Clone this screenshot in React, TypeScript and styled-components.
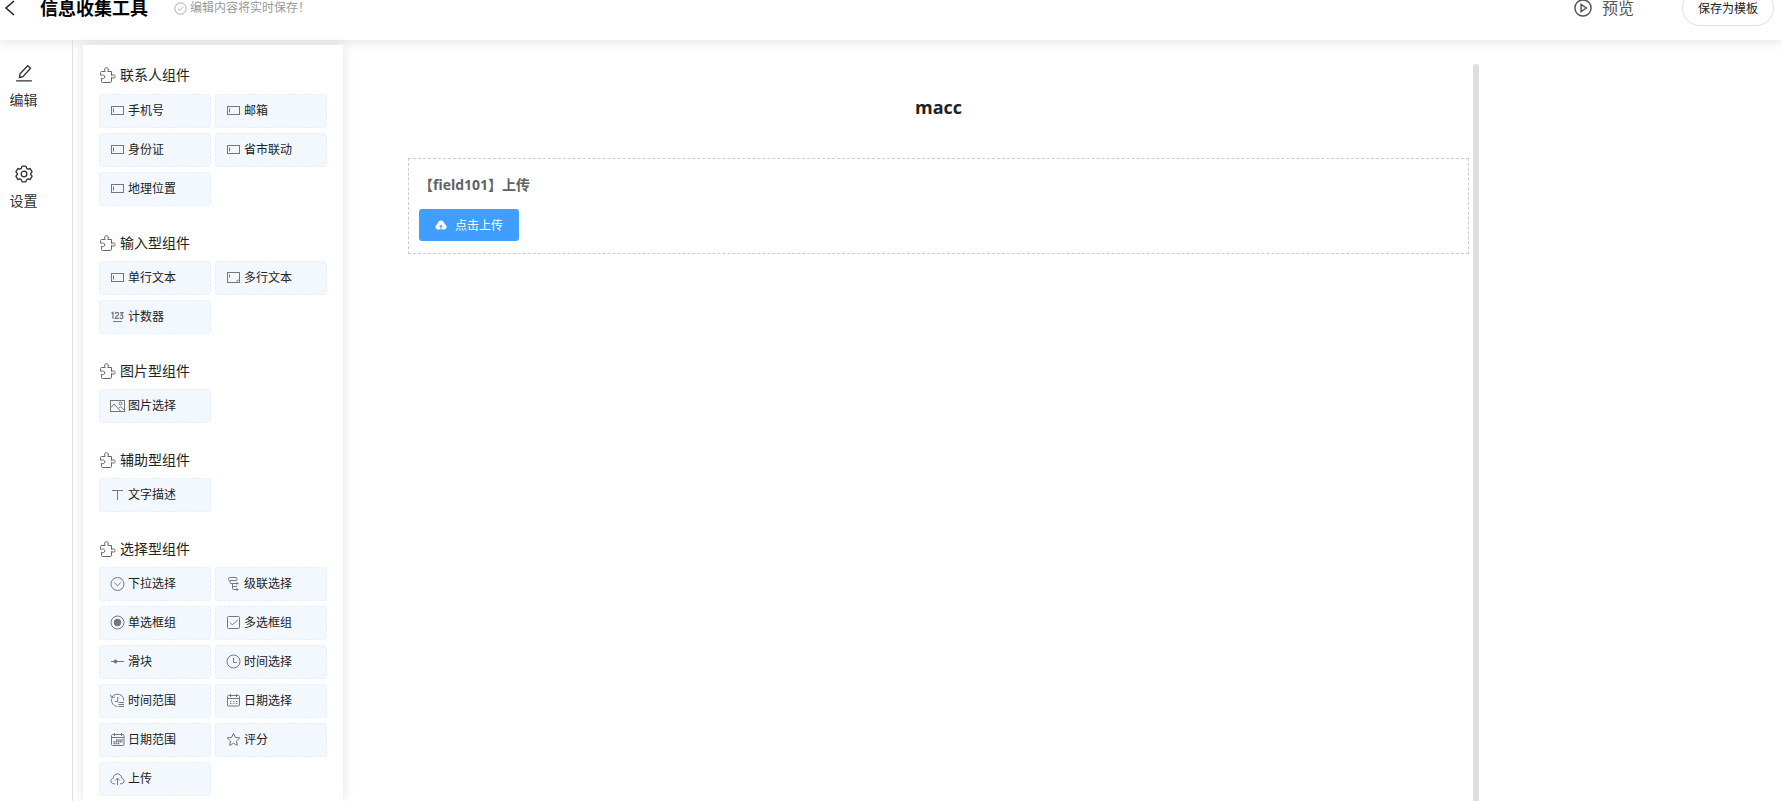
import React from 'react';
import styled, { createGlobalStyle } from 'styled-components';

const GlobalStyle = createGlobalStyle`
  * { box-sizing: border-box; }
  html, body { margin: 0; }
  body {
    background: #fff;
    color: #222;
    font-family: "Open Sans", "Noto Sans CJK SC", sans-serif;
    font-size: 14px;
    overflow: hidden;
  }
  button { font-family: inherit; cursor: pointer; }
  ul { list-style: none; margin: 0; padding: 0; }
  h1, h2, h3, p { margin: 0; }
`;

const Page = styled.div`
  display: flex;
  flex-direction: column;
  height: 100vh;
  overflow: hidden;
`;

const Header = styled.header`
  display: flex;
  align-items: center;
  flex: none;
  height: 64px;
  margin-top: -24px;
  padding: 0 8px 0 4px;
  background: #fff;
  box-shadow: 0 0 12px rgba(0, 0, 0, 0.15);
`;

const BackButton = styled.button`
  display: flex;
  padding: 0;
  border: 0;
  background: none;
  color: #222;
`;

const AppTitle = styled.h1`
  margin-left: 25px;
  color: #000;
  font-size: 18px;
  line-height: 24px;
  font-weight: 700;
`;

const SaveHint = styled.p`
  display: flex;
  align-items: center;
  gap: 3px;
  margin-left: 26px;
  color: #999;
  font-size: 12px;
  line-height: 20px;
`;

const Actions = styled.div`
  display: flex;
  align-items: center;
  gap: 48px;
  margin-left: auto;
`;

const PreviewButton = styled.button`
  display: flex;
  align-items: center;
  gap: 10px;
  padding: 0;
  border: 0;
  background: none;
  color: #555;
  font-size: 16px;
  line-height: 24px;
`;

const TemplateButton = styled.button`
  height: 36px;
  padding: 0 15px;
  border: 1px solid #dcdfe6;
  border-radius: 18px;
  background: #fff;
  color: #222;
  font-size: 12px;
`;

const Body = styled.div`
  display: flex;
  flex: 1;
  min-height: 0;
`;

const Nav = styled.nav`
  display: flex;
  flex-direction: column;
  align-items: center;
  gap: 53px;
  flex: none;
  width: 73px;
  padding: 24px 25px 0 0;
  border-right: 1px solid #e0e0e0;
`;

const NavButton = styled.button`
  display: flex;
  flex-direction: column;
  align-items: center;
  gap: 6px;
  padding: 0;
  border: 0;
  background: none;
  color: #333;
  font-size: 14px;
  line-height: 24px;
`;

const Palette = styled.aside`
  flex: none;
  width: 260px;
  margin: 5px 0 0 10px;
  padding: 20px 16px 0;
  background: #fff;
  box-shadow: 0 0 12px rgba(0, 0, 0, 0.12);
`;

const Group = styled.section`
  margin-bottom: 27px;
`;

const GroupTitle = styled.h2`
  display: flex;
  align-items: center;
  gap: 4px;
  padding: 0 0 9px 1px;
  color: #222;
  font-size: 14px;
  line-height: 20px;
  font-weight: 400;

  svg { color: #666; }

  ${Group} + ${Group} & { padding-bottom: 8px; }
`;

const Items = styled.ul`
  display: grid;
  grid-template-columns: 1fr 1fr;
  gap: 5px 4px;
`;

const ItemButton = styled.button`
  display: flex;
  align-items: center;
  gap: 3px;
  width: 100%;
  height: 34px;
  padding: 0 9px;
  border: 1px dashed #e4f0fd;
  border-radius: 3px;
  background: #f3f8ff;
  color: #222;
  font-size: 12px;
  line-height: 20px;

  svg { color: #777; }
`;

const Board = styled.main`
  display: flex;
  flex: 1;
  margin: 24px 303px 0 65px;
  min-width: 0;
`;

const Form = styled.form`
  flex: 1;
  min-width: 0;
  padding-right: 4px;
`;

const FormTitle = styled.h2`
  padding: 29px 0 37px;
  text-align: center;
  color: #222;
  font-size: 18px;
  line-height: 28px;
  font-weight: 700;
`;

const Field = styled.div`
  display: flex;
  flex-direction: column;
  align-items: flex-start;
  gap: 12px;
  padding: 14px 10px 12px;
  border: 1px dashed #ccc;
`;

const FieldLabel = styled.h3`
  color: #606266;
  font-size: 14px;
  line-height: 24px;
  font-weight: 700;
`;

const UploadButton = styled.button`
  display: flex;
  align-items: center;
  gap: 8px;
  height: 32px;
  padding: 0 16px;
  border: 0;
  border-radius: 3px;
  background: #409eff;
  color: #fff;
  font-size: 12px;
`;

const ScrollThumb = styled.div`
  flex: none;
  width: 6px;
  border-radius: 3px 3px 0 0;
  background: #dddee0;
`;

const Svg = ({ size = 16, width = 1, children }: { size?: number; width?: number; children: React.ReactNode }) => (
  <svg width={size} height={size} viewBox="0 0 16 16" fill="none" stroke="currentColor" strokeWidth={width} aria-hidden="true">
    {children}
  </svg>
);

const icons: Record<string, React.ReactNode> = {
  input: <><rect x="2.5" y="3.5" width="12" height="8" /><path d="M4.5 5.5v4" /></>,
  textarea: <><rect x="2.5" y="2.500" width="12" height="10" /><path d="M4.500 4.500v3M13 9.500v1.500h-1.500" /></>,
  number: (
    <>
      <path d="M2.400 4.300l1.600-.9v6.400M6.300 5c0-2.200 3.200-2.200 3.200 0 0 1.600-3.200 2.600-3.200 4.300h3.500M10.900 3.700h2.900l-1.600 2.400c2.300 0 2.200 3.500.3 3.500-.9 0-1.500-.4-1.600-1.200" strokeWidth="1.300" />
      <path d="M4 12.500h9" />
    </>
  ),
  image: (
    <>
      <rect x="1.500" y="2.500" width="14" height="11" />
      <circle cx="11.500" cy="5.500" r="1.500" />
      <path d="M2 9.500l3-3.500 6.500 7M9.500 10.500l2-1.800 3.500 3" />
    </>
  ),
  text: <path d="M3 3.500h11M8.500 3.500V13" />,
  select: <><circle cx="8.500" cy="8" r="6.500" /><path d="M5.200 6.500L8.500 9.800l3.300-3.300" /></>,
  cascade: (
    <>
      <rect x="3.500" y="1.500" width="8.500" height="3" rx="1" />
      <path d="M5 4.500v2q0 1 1 1h6M7.500 7.500v5q0 1 1 1H12M7.500 10.500H12" />
      <path d="M11.500 5.900L14 7.500l-2.500 1.600zM11.500 11.900l2.500 1.600-2.500 1.600z" fill="currentColor" stroke="none" />
    </>
  ),
  radio: <><circle cx="8.500" cy="7.500" r="6.500" /><circle cx="8.500" cy="7.500" r="3.700" fill="currentColor" stroke="none" /></>,
  checkbox: <><rect x="2.500" y="1.500" width="12" height="12" rx="1" /><path d="M4.800 7.300l2.500 2.600 5.500-5" /></>,
  slider: <><path d="M2 7.500h13" /><circle cx="6.500" cy="7.500" r="2" fill="currentColor" stroke="none" /></>,
  clock: <><circle cx="8.500" cy="7.500" r="6.500" /><path d="M8.500 3.800V8.500h3.200" /></>,
  timeRange: (
    <>
      <path d="M3 4C6-.3 12.500.7 14.200 4.700c.4 1 .5 2 .4 3M2.500 6c-.5 4 2.500 7.500 6 7.500" />
      <path d="M1.500 1.700l1.200 3.200 3-.9M8.700 4V8.500H6" />
      <path d="M9.500 9.500h5.500M9.500 11.500h5.500M9.500 13.500h5.500" />
    </>
  ),
  date: (
    <>
      <rect x="2.500" y="2.500" width="12" height="10.500" rx="1" />
      <path d="M2.500 5.500h12M5.500 1v3M11.500 1v3" />
      <path d="M5 8.500h8.500M5 10.500h8.500" strokeDasharray="1.400 1.600" />
    </>
  ),
  dateRange: (
    <>
      <rect x="2.500" y="2.500" width="12.500" height="11" rx="1" />
      <path d="M2.500 5.500H15M5.500 1v3M12.500 1v3" />
      <path d="M7 8h7M4.500 9.800h9M4.500 11.600h6" strokeWidth="1.400" strokeDasharray="1.600 .5" />
    </>
  ),
  star: <path d="M8.500 1.300l1.900 4.100 4.400.5-3.300 3 .9 4.500-3.900-2.200-3.900 2.200.9-4.500-3.300-3 4.400-.5z" />,
  upload: <><path d="M6 12.800H4.900C1.100 12.400 1.100 8 4.200 7.400 4.500 1.300 12.500 1.300 12.800 7.400c3.100.6 3.100 5-.7 5.400H11" /><path d="M8.500 14V7.200M6.100 9.500l2.400-2.400 2.400 2.400" /></>,
};

const PuzzleIcon = () => (
  <Svg>
    <path d="M1.500 4.500h3.700C4 2.500 4.800.6 6.500.6S9 2.500 7.800 4.500h3.700v4c2-1.300 3.700-.5 3.700 1s-1.700 2.300-3.700 1v4c0 .6-.3 1-1 1h-8c-.7 0-1-.4-1-1v-3.200c1.800.8 3.300.2 3.300-1.400S3.300 7.500 1.500 8.300H.6V5.500c0-.6.3-1 .9-1z" />
  </Svg>
);

const groups: { title: string; items: [string, string][] }[] = [
  { title: '联系人组件', items: [['input', '手机号'], ['input', '邮箱'], ['input', '身份证'], ['input', '省市联动'], ['input', '地理位置']] },
  { title: '输入型组件', items: [['input', '单行文本'], ['textarea', '多行文本'], ['number', '计数器']] },
  { title: '图片型组件', items: [['image', '图片选择']] },
  { title: '辅助型组件', items: [['text', '文字描述']] },
  {
    title: '选择型组件',
    items: [
      ['select', '下拉选择'], ['cascade', '级联选择'],
      ['radio', '单选框组'], ['checkbox', '多选框组'],
      ['slider', '滑块'], ['clock', '时间选择'],
      ['timeRange', '时间范围'], ['date', '日期选择'],
      ['dateRange', '日期范围'], ['star', '评分'],
      ['upload', '上传'],
    ],
  },
];

export default function App() {
  return (
    <>
      <GlobalStyle />
      <Page>
        <Header>
          <BackButton type="button" aria-label="返回">
            <svg width="11" height="16" viewBox="0 0 11 16" fill="none" stroke="currentColor" strokeWidth="1.6">
              <path d="M10 1L2 8l8 7" />
            </svg>
          </BackButton>
          <AppTitle>信息收集工具</AppTitle>
          <SaveHint>
            <Svg size={13}><circle cx="8" cy="8" r="7" /><path d="M4.800 8l2.400 2.400 4.200-4.400" /></Svg>
            编辑内容将实时保存！
          </SaveHint>
          <Actions>
            <PreviewButton type="button">
              <Svg size={18} width={1.3}><circle cx="8" cy="8" r="7.200" /><path d="M6.300 4.800v6.400L11 8z" /></Svg>
              预览
            </PreviewButton>
            <TemplateButton type="button">保存为模板</TemplateButton>
          </Actions>
        </Header>
        <Body>
          <Nav>
            <NavButton type="button">
              <Svg size={18} width={1.200}><path d="M1 15h14M4 12l.5-3.200L11.300 1.500l2.500 2.300L7 11.200z" /></Svg>
              编辑
            </NavButton>
            <NavButton type="button">
              <Svg size={18} width={1.200}>
                <path d="M6.300 1h3.400l.6 1.900 1.300.7 1.900-.5 1.700 3-1.300 1.400v1l1.300 1.400-1.700 3-1.900-.5-1.300.7-.6 1.900H6.300l-.6-1.900-1.300-.7-1.900.5-1.700-3 1.300-1.400v-1L.8 6.100l1.700-3 1.900.5 1.300-.7z" strokeLinejoin="round" />
                <circle cx="8" cy="8" r="2.500" />
              </Svg>
              设置
            </NavButton>
          </Nav>
          <Palette>
            {groups.map((group) => (
              <Group key={group.title}>
                <GroupTitle><PuzzleIcon />{group.title}</GroupTitle>
                <Items>
                  {group.items.map(([icon, label]) => (
                    <li key={label}>
                      <ItemButton type="button"><Svg>{icons[icon]}</Svg>{label}</ItemButton>
                    </li>
                  ))}
                </Items>
              </Group>
            ))}
          </Palette>
          <Board>
            <Form>
              <FormTitle>macc</FormTitle>
              <Field>
                <FieldLabel>【field101】上传</FieldLabel>
                <UploadButton type="button">
                  <svg width="12" height="12" viewBox="0 0 12 12" aria-hidden="true">
                    <path d="M3.200 10.500C-.4 10.400-.2 5.800 2.500 5.200 2.900.3 9.100.3 9.500 5.200c2.700.6 2.900 5.200-.7 5.300H6.500V7.800h1.300L6 5.600 4.200 7.800h1.300v2.700z" fill="currentColor" />
                  </svg>
                  点击上传
                </UploadButton>
              </Field>
            </Form>
            <ScrollThumb />
          </Board>
        </Body>
      </Page>
    </>
  );
}
